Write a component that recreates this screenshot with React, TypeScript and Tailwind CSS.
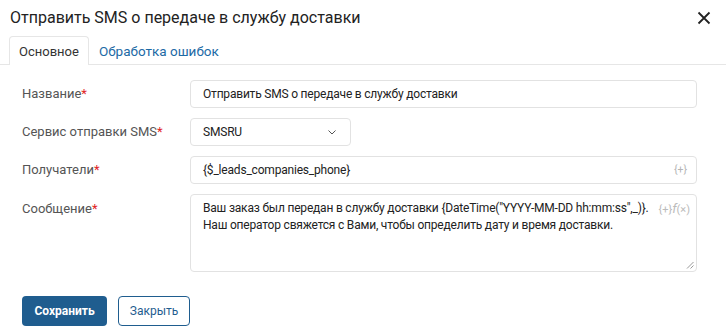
import React from 'react';

const Req = () => <span className="text-[#e02424]">*</span>;

const Label: React.FC<{ text: string; className?: string }> = ({ text, className }) => (
  <div className={`w-[168px] text-[13px] text-[#555] ${className ?? ''}`}>
    {text}
    <Req />
  </div>
);

export default function App() {
  return (
    <div
      className="w-[726px] h-[330px] bg-white text-[#222] overflow-hidden"
      style={{ fontFamily: 'Roboto, "Noto Sans", sans-serif' }}
    >
      <div className="flex items-center justify-between pl-[10px] pr-[14px] h-[36px]">
        <h1 className="text-[16px] text-[#222]">Отправить SMS о передаче в службу доставки</h1>
        <button className="text-[#222]">
          <svg width="16" height="16" viewBox="0 0 16 16" fill="none" stroke="currentColor" strokeWidth="1.8">
            <path d="M2.5 2.5 13.5 13.5M13.5 2.5 2.5 13.5" />
          </svg>
        </button>
      </div>

      <div className="flex border-b border-[#e6e6e6] pl-[9px] h-[29px]">
        <div className="px-[9px] pt-[5px] border border-b-0 border-[#e6e6e6] rounded-t-[4px] bg-white -mb-px text-[13px] text-[#333]">
          Основное
        </div>
        <div className="px-[10px] pt-[5px] text-[13.5px] text-[#1d6aa5]">Обработка ошибок</div>
      </div>

      <div className="pl-[22px] pr-[29px] pt-[15px] flex flex-col gap-[10px]">
        <div className="flex items-center">
          <Label text="Название" />
          <div className="flex-1 h-[28px] border border-[#e2e2e2] rounded-[4px] flex items-center px-[12px] text-[12px] tracking-[-0.2px]">
            Отправить SMS о передаче в службу доставки
          </div>
        </div>
        <div className="flex items-center">
          <Label text="Сервис отправки SMS" />
          <div className="w-[161px] h-[28px] border border-[#e2e2e2] rounded-[4px] flex items-center justify-between pl-[12px] pr-[14px] text-[12px] tracking-[-0.2px]">
            SMSRU
            <svg width="8" height="5" viewBox="0 0 8 5" fill="none" stroke="#555" strokeWidth="1">
              <path d="M0.5 0.5 4 4 7.5 0.5" />
            </svg>
          </div>
        </div>
        <div className="flex items-center">
          <Label text="Получатели" />
          <div className="flex-1 h-[28px] border border-[#e2e2e2] rounded-[4px] flex items-center justify-between pl-[12px] pr-[9px] text-[12px] tracking-[-0.2px]">
            {'{$_leads_companies_phone}'}
            <span className="text-[10.5px] text-[#b5b5b5] tracking-normal">{'{+}'}</span>
          </div>
        </div>
        <div className="flex items-start">
          <Label text="Сообщение" className="pt-[5px]" />
          <div className="relative flex-1 h-[78px] border border-[#e2e2e2] rounded-[4px] pl-[12px] pr-[40px] pt-[5px] text-[12px] leading-[17px] tracking-[-0.2px] whitespace-nowrap">
            Ваш заказ был передан в службу доставки {'{DateTime("YYYY-MM-DD hh:mm:ss",_)}'}.
            <br />
            Наш оператор свяжется с Вами, чтобы определить дату и время доставки.
            <span className="absolute right-[6px] top-[5px] text-[11px] text-[#bbb] tracking-normal">
              {'{+}'}<i className="text-[13px]">f</i>(×)
            </span>
            <svg className="absolute right-[2px] bottom-[2px]" width="8" height="8" viewBox="0 0 8 8" stroke="#999" strokeWidth="1">
              <path d="M7.5 1 1 7.5M7.5 4.5 4.5 7.5" />
            </svg>
          </div>
        </div>
      </div>

      <div className="flex gap-[11px] pl-[22px] pt-[24px]">
        <button className="h-[30px] w-[85px] rounded-[4px] bg-[#1f5d8f] text-white text-[12px] font-bold">
          Сохранить
        </button>
        <button className="h-[30px] w-[72px] rounded-[4px] border border-[#1f5d8f] text-[#1f5d8f] text-[12px]">
          Закрыть
        </button>
      </div>
    </div>
  );
}
